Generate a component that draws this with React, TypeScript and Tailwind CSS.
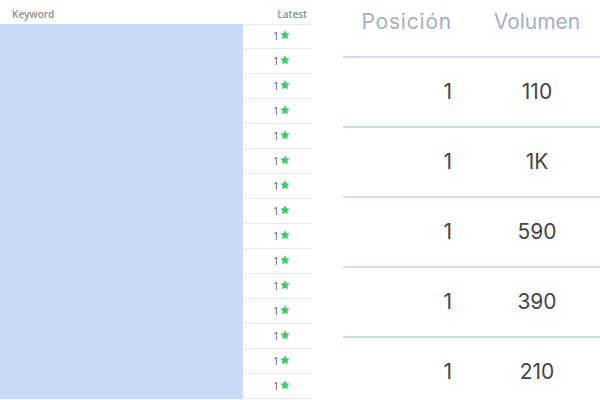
import { Star } from "lucide-react"

const rows = Array.from({ length: 15 })
const stats = [
  { pos: "1", vol: "110" },
  { pos: "1", vol: "1K" },
  { pos: "1", vol: "590" },
  { pos: "1", vol: "390" },
  { pos: "1", vol: "210" },
]

function KeywordTable() {
  return (
    <div className="w-[312px] shrink-0 font-['Open_Sans',sans-serif]">
      <div className="h-[24px] flex items-start justify-between pt-[7px] pl-3 pr-[5px] text-[10px] leading-[14px] font-semibold text-[#8c8c8c]">
        <span>Keyword</span>
        <span>Latest</span>
      </div>
      {rows.map((_, i) => (
        <div key={i} className="flex h-[25px]">
          <div className="w-[243px] bg-[#c9daf8]" />
          <div className={`flex-1 flex items-center justify-center pl-[8px] border-b border-[#e8e8e8] text-[10px] text-[#555] ${i === 0 ? "border-t" : ""}`}>
            <span>1</span>
            <Star className="w-[10px] h-[10px] ml-[1px] -mt-[3px] text-[#3ccb6b] fill-[#3ccb6b]" strokeWidth={1} />
          </div>
        </div>
      ))}
    </div>
  )
}

function StatsTable() {
  return (
    <div className="flex-1 ml-[31px] font-['Inter',sans-serif]">
      <div className="h-[58px] flex pt-[6px] text-[21px] text-[#a7aec6] border-b-2 border-[#d3dae8]">
        <div className="w-[109px] text-right tracking-[0.8px]">Posición</div>
        <div className="w-[114px] ml-[28px] text-center">Volumen</div>
      </div>
      {stats.map((s, i) => (
        <div key={i} className="h-[70px] flex items-center text-[21px] text-[#444] border-b-2 border-[#d3dae8]">
          <div className="w-[109px] text-right">{s.pos}</div>
          <div className="w-[114px] ml-[28px] text-center">{s.vol}</div>
        </div>
      ))}
    </div>
  )
}

export default function App() {
  return (
    <div className="w-[600px] h-[400px] overflow-hidden bg-white flex">
      <KeywordTable />
      <StatsTable />
    </div>
  )
}
